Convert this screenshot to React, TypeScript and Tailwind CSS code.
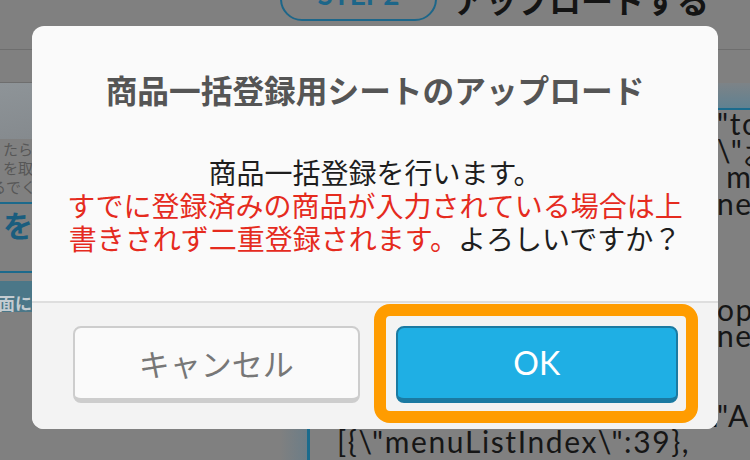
import React from "react";

// 背景ページ（モーダルのオーバーレイで暗くなった状態の色で描く）
const codeLines: [string, string][] = [
  ["{\\\"type\\\":\\\"link\\\",\\\"url\\\":\\\"/", "\"to"],
  ["\\\"title\\\":\\\"おすすめ商品", "\\\"お"],
  ["\\\"name\\\":\\\"top", "\u00a0m"],
  ["\\\"label\\\":\\\"", "ne"],
  ["", ""],
  ["", ""],
  ["", ""],
  ["\\\"menu\\\":\\\"sh", "op"],
  ["\\\"cor", "ner"],
  ["", ""],
  ["", ""],
  ["{\\\"appPageType\\\":\\\"shopping\\\",\\\"", "\"A"],
];

const lastLine = '[{\\"menuListIndex\\":39},';

function BackgroundPage() {
  return (
    <div className="flex flex-col">
      {/* header */}
      <div className="-mt-[23px] flex h-[73px] items-start border-b border-[#6e6e6e] pl-[280px]">
        <div className="flex h-[44px] w-[157px] items-center justify-center rounded-full border-2 border-[#1d6689] pb-[10px] font-['Lato',sans-serif] text-[28px] font-bold text-[#1d6689]">
          STEP2
        </div>
        <div className="ml-[16px] flex h-[44px] items-center text-[32px] font-bold text-[#141414]">
          アップロードする
        </div>
      </div>

      <div className="flex">
        {/* left column */}
        <div className="w-[280px] shrink-0">
          <div className="h-[33px] border-b border-[#6e6e6e]" />
          <div className="h-[56px] bg-gradient-to-br from-[#8e9498] via-[#868b8f] to-[#7e8386]" />
          <div className="whitespace-nowrap pl-[3px] text-[15px] leading-[19px] text-[#575757]">
            <div>たらファイル</div>
            <div>を取り込み</div>
            <div className="-ml-[12px]">るでください</div>
          </div>
          <div className="mt-[6px] h-[2px] bg-[#1c6a8c]" />
          <div className="whitespace-nowrap pl-[3px] text-[30px] font-bold leading-[40px] text-[#1a5d7e]">
            をアップロード
          </div>
          <div className="mt-[27px] h-[2px] bg-[#1c6a8c]" />
          <div className="mt-[8px] flex h-[31px] items-end whitespace-nowrap bg-[#4b7788] text-[17px] font-bold leading-[17px] text-[#c3ccd1]">
            <span className="-ml-[2px] pb-[1px]">面に表示</span>
          </div>
        </div>

        {/* right column */}
        <div className="flex-1">
          <div className="h-[33px]" />
          <div className="h-[27px] border-b-2 border-[#1a6b8d] bg-gradient-to-b from-[#7d8387] to-[#5f8191]" />
          <div className="flex h-[400px]">
            <div className="w-[27px] bg-gradient-to-r from-[#808080] to-[#6c7d87]" />
            <div className="flex-1 overflow-hidden border-l-[3px] border-[#1a6b8d] pl-[27px] font-['Lato',sans-serif] text-[30px] leading-[26.5px] tracking-[1.6px] text-[#161616]">
              {codeLines.map(([pre, post], i) => (
                <div key={i} className="flex h-[26.5px] whitespace-nowrap">
                  <span className="inline-block w-[380px] shrink-0 overflow-hidden">{pre}</span>
                  <span>{post}</span>
                </div>
              ))}
              <div className="whitespace-nowrap">{lastLine}</div>
            </div>
          </div>
        </div>
      </div>
    </div>
  );
}

export default function App() {
  return (
    <div className="relative h-[460px] w-[750px] overflow-hidden bg-[#808080] font-['Noto_Sans_CJK_JP',sans-serif]">
      <BackgroundPage />

      {/* dialog */}
      <div className="absolute left-[32px] top-[26px] flex h-[403px] w-[686px] flex-col overflow-hidden rounded-[12px] bg-[#fafafa]">
        <div className="h-[275px] px-[33px] pt-[43px] text-center">
          <h2 className="text-[31.7px] font-bold leading-[40px] text-[#555555]">
            商品一括登録用シートのアップロード
          </h2>
          <p className="mt-[46.7px] text-[28px] leading-[33px] text-[#1e1e1e]">
            商品一括登録を行います。
            <br />
            <span className="text-[#e52b1e]">
              すでに登録済みの商品が入力されている場合は上書きされず二重登録されます。
            </span>
            よろしいですか？
          </p>
        </div>

        <div className="flex flex-1 gap-[36px] border-t-2 border-[#dedede] bg-[#f3f3f3] pb-[26px] pl-[41px] pr-[40px] pt-[23px]">
          <button className="h-[77px] flex-1 rounded-[8px] border-2 border-b-[5px] border-[#cdcdcd] bg-[#fafafa] text-[31px] text-[#777777]">
            キャンセル
          </button>
          <div className="relative flex-1">
            <button className="h-[77px] w-full rounded-[8px] border-2 border-b-[5px] border-[#1b7aa2] bg-[#1fafe4] font-['Lato',sans-serif] text-[32px] text-white">
              OK
            </button>
            <div className="pointer-events-none absolute -bottom-[20px] -left-[22px] -right-[20px] -top-[22px] rounded-[16px] border-[12px] border-[#ff9c00]" />
          </div>
        </div>
      </div>
    </div>
  );
}
